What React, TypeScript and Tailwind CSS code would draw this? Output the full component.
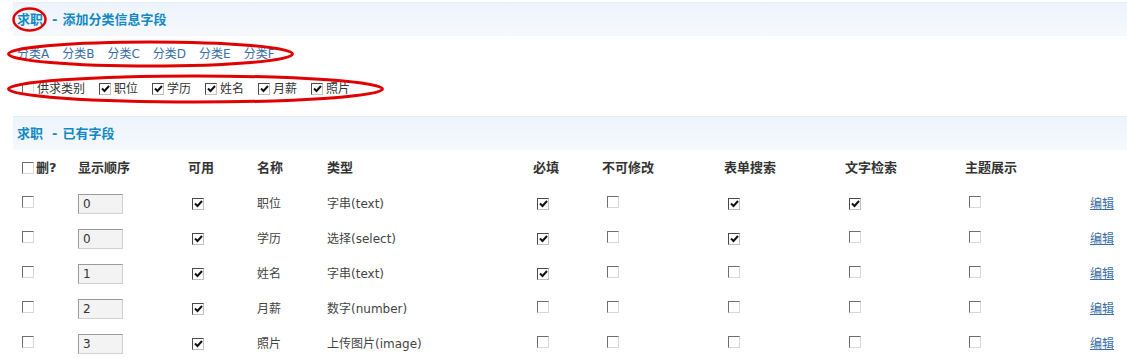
import React from "react";

const font = { fontFamily: '"DejaVu Sans", "Noto Sans CJK SC", sans-serif' };

function Box({ checked = false, dark = false }: { checked?: boolean; dark?: boolean }) {
  return (
    <span
      className={
        "relative inline-flex h-[12px] w-[12px] shrink-0 items-center justify-center border bg-white " +
        (dark
          ? "border-t-[#4a4a4a] border-l-[#4a4a4a] border-b-[#c0c0c0] border-r-[#c0c0c0]"
          : "border-t-[#6e6e6e] border-l-[#6e6e6e] border-b-[#d8d8d8] border-r-[#d8d8d8]")
      }
    >
      {checked && (
        <svg width="9" height="8" viewBox="0 0 9 8">
          <path d="M1 3.5 L3.5 6 L8 1" fill="none" stroke="#111" strokeWidth="2" />
        </svg>
      )}
    </span>
  );
}

function Band({ title }: { title: string }) {
  return (
    <div className="ml-[13px] flex h-[34px] items-center border-t border-[#e8eef0] bg-gradient-to-b from-[#edf4fd] to-[#f6f9fc] pl-[4px] text-[13px] font-bold text-[#1388c3]">
      <span>求职</span>
      <span className="ml-[9px]">-</span>
      <span className="ml-[5px]">{title}</span>
    </div>
  );
}

const rows = [
  { order: "0", name: "职位", type: "字串(text)", req: true, fixed: false, form: true, text: true, theme: false },
  { order: "0", name: "学历", type: "选择(select)", req: true, fixed: false, form: true, text: false, theme: false },
  { order: "1", name: "姓名", type: "字串(text)", req: true, fixed: false, form: false, text: false, theme: false },
  { order: "2", name: "月薪", type: "数字(number)", req: false, fixed: false, form: false, text: false, theme: false },
  { order: "3", name: "照片", type: "上传图片(image)", req: false, fixed: false, form: false, text: false, theme: false },
];

const cols = "grid grid-cols-[60px_110px_69px_70px_206px_69px_122px_121px_120px_125px_1fr] items-center pl-[18px]";

export default function App() {
  return (
    <div className="relative h-[358px] w-[1127px] overflow-hidden bg-white pt-[2px] text-[12px] text-[#444]" style={font}>
      <Band title="添加分类信息字段" />

      <div className="flex h-[36px] items-center gap-[13px] pl-[17px] text-[#3a6ea5]">
        {["分类A", "分类B", "分类C", "分类D", "分类E", "分类F"].map((c) => (
          <a key={c} href="#">{c}</a>
        ))}
      </div>

      <div className="flex h-[34px] items-center gap-[14px] pl-[22px] text-[#333]">
        {[
          ["供求类别", false],
          ["职位", true],
          ["学历", true],
          ["姓名", true],
          ["月薪", true],
          ["照片", true],
        ].map(([label, on]) => (
          <label key={label as string} className="flex items-center">
            <Box checked={on as boolean} dark={on as boolean} />
            <span className="ml-[3px]">{label}</span>
          </label>
        ))}
      </div>

      <div className="mt-[10px]">
        <Band title="已有字段" />
      </div>

      <div className={cols + " h-[36px] text-[13px] font-bold text-[#333]"}>
        <div className="flex items-center pl-[4px]">
          <Box />
          <span className="ml-[2px]">删?</span>
        </div>
        <div>显示顺序</div>
        <div>可用</div>
        <div>名称</div>
        <div>类型</div>
        <div>必填</div>
        <div>不可修改</div>
        <div>表单搜索</div>
        <div>文字检索</div>
        <div>主题展示</div>
        <div />
      </div>

      {rows.map((r, i) => (
        <div key={i} className={cols + " h-[35px]"}>
          <div className="pl-[4px]"><Box /></div>
          <div>
            <div className="flex h-[20px] w-[45px] items-center border border-t-[#9a9a9a] border-l-[#9a9a9a] border-b-[#d0d0d0] border-r-[#d0d0d0] bg-[#f3f3f3] pl-[4px] text-[#333]">
              {r.order}
            </div>
          </div>
          <div className="pl-[4px]"><Box checked dark /></div>
          <div>{r.name}</div>
          <div>{r.type}</div>
          <div className="pl-[4px]"><Box checked={r.req} dark={r.req} /></div>
          <div className="pl-[5px]"><Box checked={r.fixed} /></div>
          <div className="pl-[4px]"><Box checked={r.form} dark={r.form} /></div>
          <div className="pl-[4px]"><Box checked={r.text} dark={r.text} /></div>
          <div className="pl-[4px]"><Box checked={r.theme} /></div>
          <div>
            <a href="#" className="text-[#3a6ea5] underline">编辑</a>
          </div>
        </div>
      ))}

      <svg className="pointer-events-none absolute left-0 top-0" width="1127" height="358">
        <ellipse cx="29.5" cy="19.5" rx="16" ry="11" fill="none" stroke="#e00000" strokeWidth="2.5" />
        <ellipse cx="150.5" cy="54" rx="142" ry="12" fill="none" stroke="#e00000" strokeWidth="3" />
        <ellipse cx="195.5" cy="89" rx="187" ry="13" fill="none" stroke="#e00000" strokeWidth="3" />
      </svg>
    </div>
  );
}
